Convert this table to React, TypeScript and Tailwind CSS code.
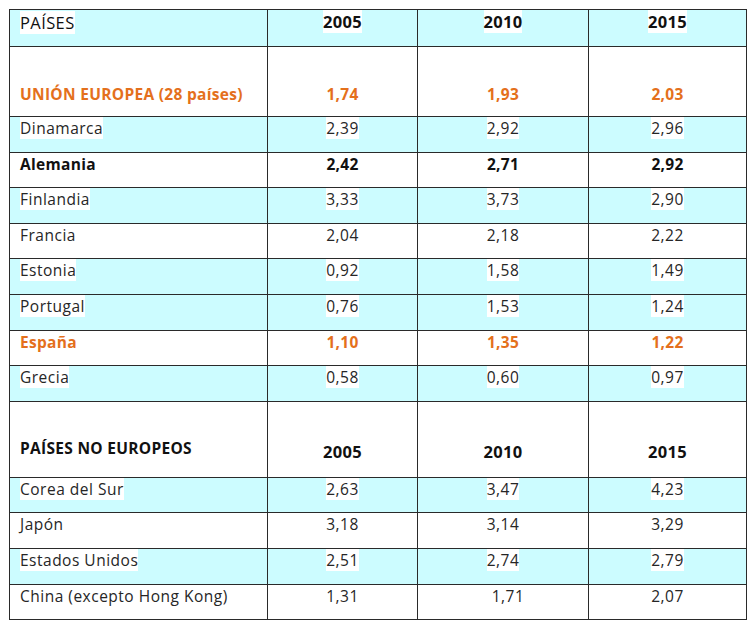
import React from 'react';

type Tone = 'plain' | 'bold' | 'orange';

interface Row {
  name: string;
  values: [string, string, string];
  tone: Tone;
  cyan: boolean;
}

const euRows: Row[] = [
  { name: 'Dinamarca', values: ['2,39', '2,92', '2,96'], tone: 'plain', cyan: true },
  { name: 'Alemania', values: ['2,42', '2,71', '2,92'], tone: 'bold', cyan: false },
  { name: 'Finlandia', values: ['3,33', '3,73', '2,90'], tone: 'plain', cyan: true },
  { name: 'Francia', values: ['2,04', '2,18', '2,22'], tone: 'plain', cyan: false },
  { name: 'Estonia', values: ['0,92', '1,58', '1,49'], tone: 'plain', cyan: true },
  { name: 'Portugal', values: ['0,76', '1,53', '1,24'], tone: 'plain', cyan: true },
  { name: 'España', values: ['1,10', '1,35', '1,22'], tone: 'orange', cyan: false },
  { name: 'Grecia', values: ['0,58', '0,60', '0,97'], tone: 'plain', cyan: true },
];

const otherRows: Row[] = [
  { name: 'Corea del Sur', values: ['2,63', '3,47', '4,23'], tone: 'plain', cyan: true },
  { name: 'Japón', values: ['3,18', '3,14', '3,29'], tone: 'plain', cyan: false },
  { name: 'Estados Unidos', values: ['2,51', '2,74', '2,79'], tone: 'plain', cyan: true },
  { name: 'China (excepto Hong Kong)', values: ['1,31', '1,71', '2,07'], tone: 'plain', cyan: false },
];

const toneClass: Record<Tone, string> = {
  plain: 'font-normal text-[#262626] tracking-[0.5px]',
  bold: 'font-bold text-[#111] tracking-[0.3px]',
  orange: 'font-bold text-[#e4701c] tracking-[0.3px]',
};

const cell = 'border border-[#2a2a2a] align-top p-0';

const Hl: React.FC<{ children: React.ReactNode }> = ({ children }) => (
  <span className="bg-white">{children}</span>
);

const DataRow: React.FC<{ row: Row }> = ({ row }) => {
  const bg = row.cyan ? 'bg-[#ccfcff]' : 'bg-white';
  return (
    <tr className={`h-[35.6px] ${bg} ${toneClass[row.tone]}`}>
      <td className={`${cell} pl-[10px] pt-[1px]`}>
        <Hl>{row.name}</Hl>
      </td>
      {row.values.map((v, i) => (
        <td
          key={i}
          className={`${cell} text-center pt-[1px] ${row.name.startsWith('China') && i === 1 ? 'pl-[10px]' : ''}`}
        >
          <Hl>{v}</Hl>
        </td>
      ))}
    </tr>
  );
};

export default function App() {
  return (
    <div className="min-h-screen bg-white pt-[9px] pl-[9px] font-['Open_Sans',sans-serif] text-[15.5px] leading-[20px]">
      <table className="border-collapse border border-[#444] table-fixed w-[737px]">
        <colgroup>
          <col className="w-[258px]" />
          <col className="w-[150px]" />
          <col className="w-[171px]" />
          <col className="w-[158px]" />
        </colgroup>
        <tbody>
          <tr className="h-[37px] bg-[#ccfcff] text-[#111]">
            <td className={`${cell} pl-[10px] pt-[3px] text-[16.5px] tracking-[0.4px]`}>
              <Hl>PAÍSES</Hl>
            </td>
            {['2005', '2010', '2015'].map((y) => (
              <td key={y} className={`${cell} text-center font-bold pt-[2px] text-[16.5px] tracking-[0.3px]`}>
                <Hl>{y}</Hl>
              </td>
            ))}
          </tr>

          <tr className={`h-[70px] bg-white ${toneClass.orange}`}>
            <td className={`${cell} pl-[10px] pt-[37px]`}>UNIÓN EUROPEA (28 países)</td>
            {['1,74', '1,93', '2,03'].map((v) => (
              <td key={v} className={`${cell} text-center pt-[37px]`}>
                {v}
              </td>
            ))}
          </tr>

          {euRows.map((r) => (
            <DataRow key={r.name} row={r} />
          ))}

          <tr className="h-[76px] bg-white font-bold text-[#111] tracking-[0.3px]">
            <td className={`${cell} pl-[10px] pt-[36px]`}>PAÍSES NO EUROPEOS</td>
            {['2005', '2010', '2015'].map((y) => (
              <td key={y} className={`${cell} text-center pt-[40px] text-[16.5px]`}>
                {y}
              </td>
            ))}
          </tr>

          {otherRows.map((r) => (
            <DataRow key={r.name} row={r} />
          ))}
        </tbody>
      </table>
    </div>
  );
}
